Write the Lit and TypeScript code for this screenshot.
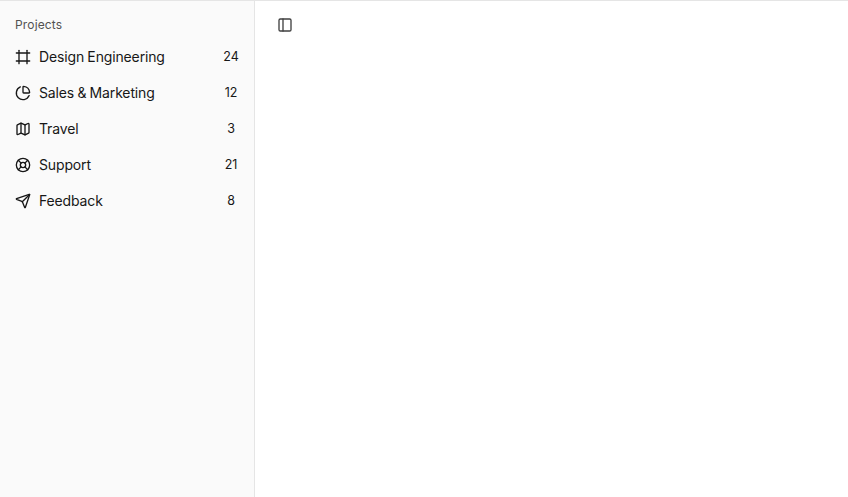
import { LitElement, html, css, svg } from 'lit';
import { customElement } from 'lit/decorators.js';

const icons = {
  frame: svg`<line x1="22" x2="2" y1="6" y2="6"/><line x1="22" x2="2" y1="18" y2="18"/><line x1="6" x2="6" y1="2" y2="22"/><line x1="18" x2="18" y1="2" y2="22"/>`,
  pie: svg`<path d="M21 12c.552 0 1.005-.449.95-.998a10 10 0 0 0-8.953-8.951c-.55-.055-.998.398-.998.95v8a1 1 0 0 0 1 1z"/><path d="M21.21 15.89A10 10 0 1 1 8 2.83"/>`,
  map: svg`<path d="M14.106 5.553a2 2 0 0 0 1.788 0l3.659-1.83A1 1 0 0 1 21 4.619v12.764a1 1 0 0 1-.553.894l-4.553 2.277a2 2 0 0 1-1.788 0l-4.212-2.106a2 2 0 0 0-1.788 0l-3.659 1.83A1 1 0 0 1 3 19.381V6.618a1 1 0 0 1 .553-.894l4.553-2.277a2 2 0 0 1 1.788 0z"/><path d="M15 5.764v15"/><path d="M9 3.236v15"/>`,
  buoy: svg`<circle cx="12" cy="12" r="10"/><path d="m4.93 4.93 4.24 4.24"/><path d="m14.83 9.17 4.24-4.24"/><path d="m14.83 14.83 4.24 4.24"/><path d="m9.17 14.83-4.24 4.24"/><circle cx="12" cy="12" r="4"/>`,
  send: svg`<path d="M14.536 21.686a.5.5 0 0 0 .937-.024l6.5-19a.496.496 0 0 0-.635-.635l-19 6.5a.5.5 0 0 0-.024.937l7.93 3.18a2 2 0 0 1 1.112 1.11z"/><path d="m21.854 2.147-10.94 10.939"/>`,
  panel: svg`<rect width="18" height="18" x="3" y="3" rx="2"/><path d="M9 3v18"/>`,
};

const projects = [
  { name: 'Design Engineering', count: 24, icon: icons.frame },
  { name: 'Sales & Marketing', count: 12, icon: icons.pie },
  { name: 'Travel', count: 3, icon: icons.map },
  { name: 'Support', count: 21, icon: icons.buoy },
  { name: 'Feedback', count: 8, icon: icons.send },
];

const icon = (body: unknown) => html`<svg class="icon" viewBox="0 0 24 24">${body}</svg>`;

@customElement('app-root')
export class AppRoot extends LitElement {
  static styles = css`
    :host {
      display: flex;
      height: 100vh;
      box-sizing: border-box;
      border-top: 1px solid #e5e5e5;
      background: #fff;
      color: #0a0a0a;
      font-family: Inter, "Liberation Sans", sans-serif;
    }
    .sidebar {
      width: 255px;
      flex: none;
      box-sizing: border-box;
      padding: 8px;
      background: #fafafa;
      border-right: 1px solid #e5e5e5;
    }
    .label {
      height: 32px;
      padding: 0 7px 2px;
      box-sizing: border-box;
      display: flex;
      align-items: center;
      font-size: 12px;
      letter-spacing: 0.15px;
      color: #525252;
    }
    .item {
      height: 32px;
      margin-bottom: 4px;
      padding: 0 7px;
      display: flex;
      align-items: center;
      gap: 8px;
      font-size: 14px;
      color: #171717;
    }
    .name {
      flex: 1;
      padding-bottom: 2px;
      letter-spacing: -0.14px;
      word-spacing: -0.5px;
    }
    .count {
      width: 16px;
      padding-bottom: 2px;
      text-align: center;
      font-size: 12.5px;
      white-space: nowrap;
    }
    .icon {
      width: 16px;
      height: 16px;
      flex: none;
      fill: none;
      stroke: currentColor;
      stroke-width: 2;
      stroke-linecap: round;
      stroke-linejoin: round;
    }
    main {
      flex: 1;
      padding: 16px 22px;
    }
    main .icon {
      display: block;
      color: #404040;
    }
  `;

  render() {
    return html`
      <aside class="sidebar">
        <div class="label">Projects</div>
        ${projects.map(p => html`
          <div class="item">
            ${icon(p.icon)}
            <span class="name">${p.name}</span>
            <span class="count">${p.count}</span>
          </div>
        `)}
      </aside>
      <main>${icon(icons.panel)}</main>
    `;
  }
}
